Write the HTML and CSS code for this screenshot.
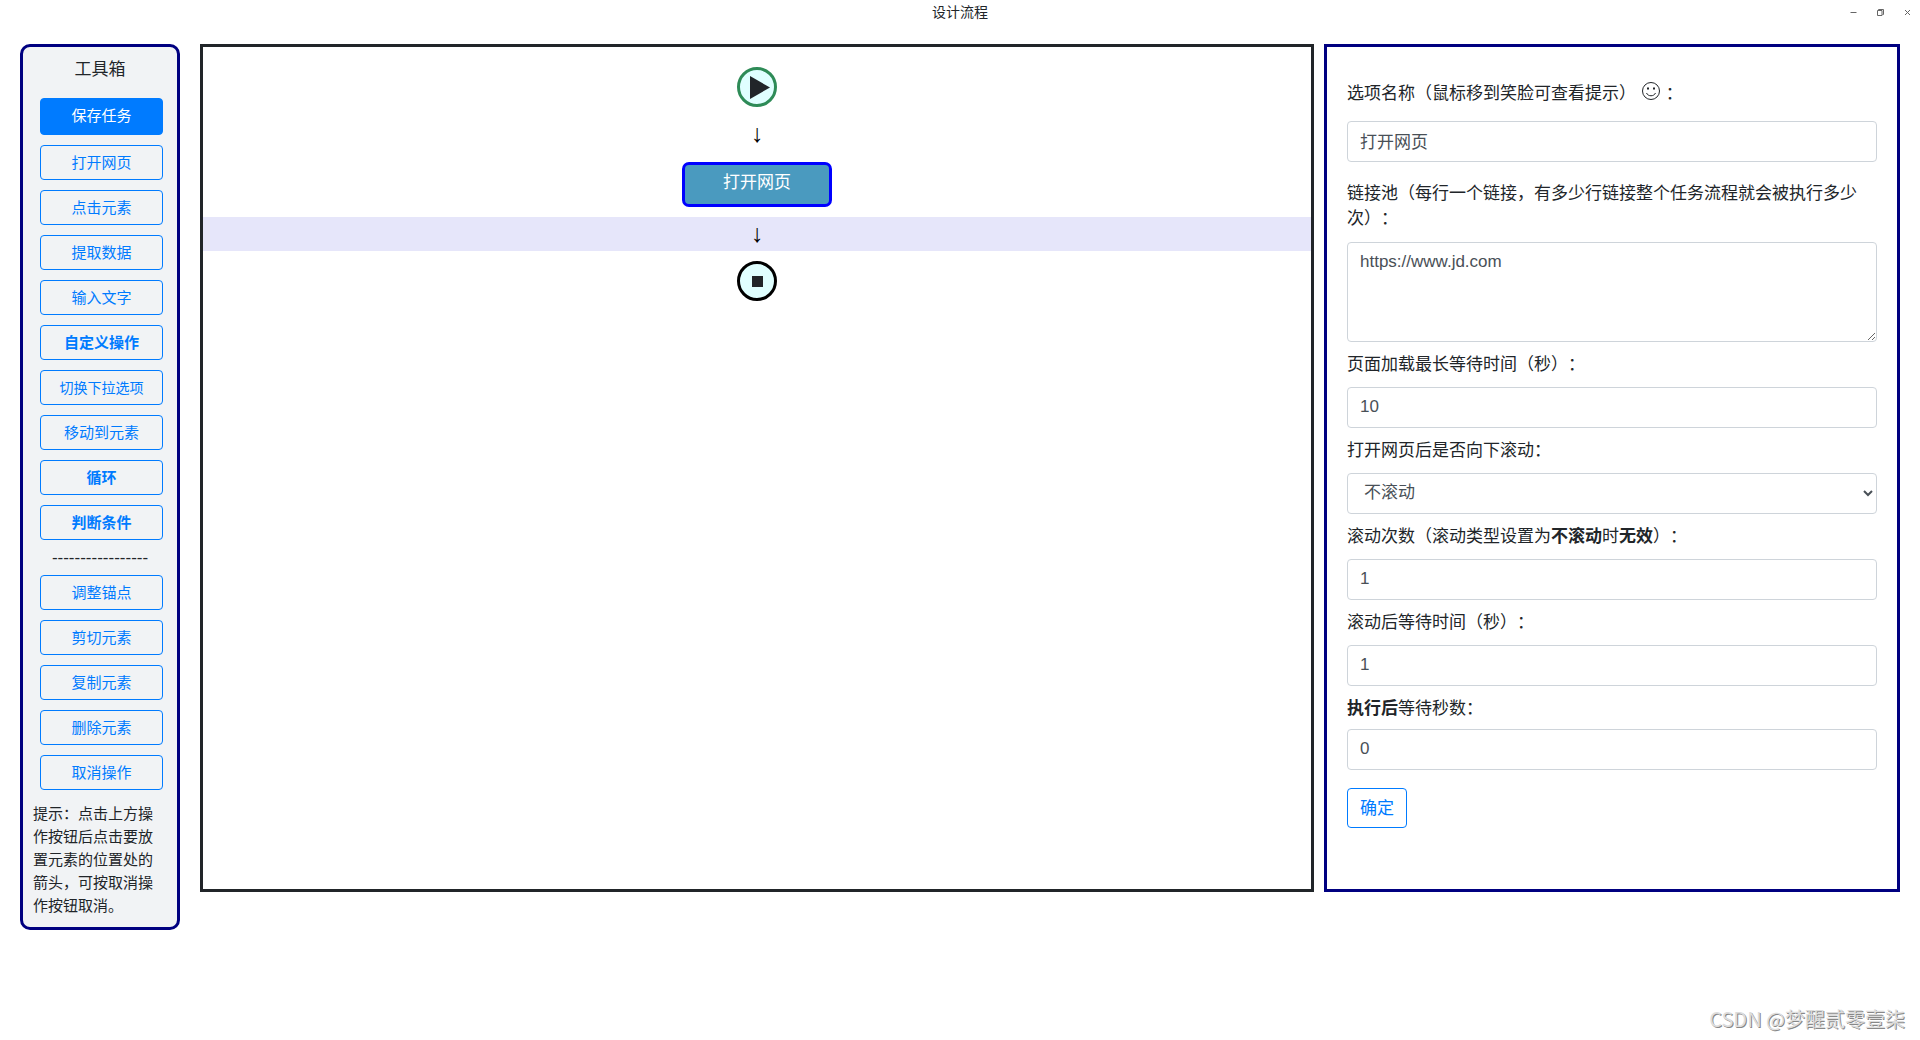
FILE: index.html
```html
<!DOCTYPE html>
<html lang="zh-CN">
<head>
<meta charset="utf-8">
<title>设计流程</title>
<link rel="stylesheet" href="styles.css">
</head>
<body>
<header class="titlebar">
  <h1 class="titlebar-title">设计流程</h1>
  <div class="window-controls">
    <button class="window-btn" type="button" aria-label="最小化"><svg width="7" height="7" viewBox="0 0 7 7"><path d="M0.5 3.5h6" /></svg></button>
    <button class="window-btn" type="button" aria-label="还原"><svg width="7" height="7" viewBox="0 0 7 7"><path d="M1.5 1V.5h5v5H5.500M.5 1.500h4.500v5h-4.500z" /></svg></button>
    <button class="window-btn" type="button" aria-label="关闭"><svg width="7" height="7" viewBox="0 0 7 7"><path d="M1 1l5 5M6 1l-5 5" /></svg></button>
  </div>
</header>
<main class="workspace">
  <aside class="toolbox">
    <h2 class="toolbox-title">工具箱</h2>
    <div class="tools">
      <button class="tool tool-primary" type="button">保存任务</button>
      <button class="tool" type="button">打开网页</button>
      <button class="tool" type="button">点击元素</button>
      <button class="tool" type="button">提取数据</button>
      <button class="tool" type="button">输入文字</button>
      <button class="tool tool-strong" type="button">自定义操作</button>
      <button class="tool tool-small" type="button">切换下拉选项</button>
      <button class="tool" type="button">移动到元素</button>
      <button class="tool tool-strong" type="button">循环</button>
      <button class="tool tool-strong" type="button">判断条件</button>
    </div>
    <p class="divider">-----------------</p>
    <div class="tools">
      <button class="tool" type="button">调整锚点</button>
      <button class="tool" type="button">剪切元素</button>
      <button class="tool" type="button">复制元素</button>
      <button class="tool" type="button">删除元素</button>
      <button class="tool" type="button">取消操作</button>
    </div>
    <p class="tip">提示：点击上方操作按钮后点击要放置元素的位置处的箭头，可按取消操作按钮取消。</p>
  </aside>
  <div class="editor">
    <section class="flow">
      <div class="terminal terminal-start"><svg width="40" height="40" viewBox="0 0 40 40"><path d="M13 9v23l20-11.500z" /></svg></div>
      <div class="arrow">↓</div>
      <div class="node">打开网页</div>
      <div class="arrow arrow-active">↓</div>
      <div class="terminal terminal-end"><svg width="40" height="40" viewBox="0 0 40 40"><path d="M15 15h11v11h-11z" /></svg></div>
    </section>
    <form class="options">
      <label class="label label-name" for="name">选项名称（鼠标移到笑脸可查看提示） <svg class="smile" width="20" height="20" viewBox="0 0 20 20"><circle cx="10" cy="10" r="8.500" /><path d="M5.500 12c1.500 3.700 7.500 3.700 9 0" /><path class="smile-eyes" d="M6 6.500h2v2h-2zM12 6.500h2v2h-2z" /></svg>：</label>
      <input class="control" id="name" type="text" value="打开网页">
      <label class="label label-links" for="links">链接池（每行一个链接，有多少行链接整个任务流程就会被执行多少次）：</label>
      <textarea class="control control-area" id="links">https://www.jd.com</textarea>
      <label class="label" for="max-wait">页面加载最长等待时间（秒）：</label>
      <input class="control" id="max-wait" type="text" value="10">
      <label class="label" for="scroll">打开网页后是否向下滚动：</label>
      <select class="control control-select" id="scroll"><option>不滚动</option></select>
      <label class="label" for="scroll-count">滚动次数（滚动类型设置为<b>不滚动</b>时<b>无效</b>）：</label>
      <input class="control" id="scroll-count" type="text" value="1">
      <label class="label" for="scroll-wait">滚动后等待时间（秒）：</label>
      <input class="control" id="scroll-wait" type="text" value="1">
      <label class="label label-last" for="after-wait"><b>执行后</b>等待秒数：</label>
      <input class="control" id="after-wait" type="text" value="0">
      <button class="confirm" type="button">确定</button>
    </form>
  </div>
</main>
<footer class="credit">CSDN @梦醒贰零壹柒</footer>
</body>
</html>
```
FILE: styles.css
```css
* { box-sizing: border-box; }
body {
  margin: 0;
  min-height: 100vh;
  display: flex;
  flex-direction: column;
  background: #fff;
  color: #212529;
  font: 17px/25px "Liberation Sans", "Noto Sans CJK SC", sans-serif;
  text-spacing-trim: space-all;
}
h1, h2, p { margin: 0; font-weight: 400; }
button, input, textarea, select { font: inherit; }
b { font-weight: 700; }

.titlebar {
  display: grid;
  grid-template-columns: 1fr auto 1fr;
  align-items: center;
  height: 24px;
}
.titlebar-title { grid-column: 2; font-size: 14px; line-height: 24px; }
.window-controls { display: flex; justify-content: flex-end; gap: 10px; padding-right: 4px; }
.window-btn {
  display: flex;
  align-items: center;
  justify-content: center;
  width: 17px;
  height: 24px;
  padding: 0;
  border: 0;
  background: none;
}
.window-btn svg { fill: none; stroke: #666; }

.workspace {
  display: grid;
  grid-template-columns: 160px 1fr;
  gap: 20px;
  align-items: start;
  padding: 20px;
}
.toolbox {
  padding: 10px;
  border: 3px solid navy;
  border-radius: 10px;
  background: #f1f3f5;
}
.toolbox-title { margin-bottom: 16px; font-size: 17px; line-height: 25px; text-align: center; }
.tools { display: grid; gap: 10px; padding: 0 4px 0 7px; }
.tool {
  height: 35px;
  padding: 0;
  border: 1px solid #007bff;
  border-radius: 4px;
  background: none;
  color: #007bff;
  font-size: 15px;
  line-height: 22px;
}
.tool-primary { height: 37px; padding-bottom: 2px; background: #007bff; color: #fff; }
.tool-strong { font-weight: 700; }
.tool-small { font-size: 14px; }
.divider { padding: 5px 0; text-align: center; }
.tip { margin-top: 12px; padding-right: 10px; font-size: 15px; line-height: 23px; }

.editor {
  display: grid;
  grid-template-columns: 1fr 30vw;
  gap: 10px;
}
.flow {
  display: flex;
  flex-direction: column;
  align-items: center;
  gap: 10px;
  padding-top: 20px;
  border: 3px solid #212529;
}
.terminal { width: 40px; height: 40px; border-radius: 50%; background: #e0ffff; }
.terminal svg { display: block; margin: -3px; fill: #212529; }
.terminal-start { border: 3px solid seagreen; }
.terminal-end { border: 3px solid #000; }
.arrow {
  align-self: stretch;
  padding-bottom: 2px;
  font-size: 25px;
  line-height: 33px;
  text-align: center;
  color: #000;
}
.arrow-active { line-height: 32px; background: #e6e6fa; }
.node {
  width: 150px;
  height: 45px;
  border: 3px solid blue;
  border-radius: 7px;
  background: #4a9abf;
  color: #fff;
  line-height: 35px;
  text-align: center;
}

.options {
  display: flex;
  flex-direction: column;
  padding: 24px 20px 61px;
  border: 3px solid navy;
}
.label { padding: 10px 0; }
.label-name { padding-bottom: 15px; }
.label-links { padding: 19px 0 11px; }
.label-last { padding-bottom: 8px; }
.smile { margin: -5px 5px 0 0; vertical-align: -2px; fill: none; stroke: #212529; }
.smile-eyes { fill: #212529; stroke: none; }
.control {
  width: 100%;
  height: 41px;
  padding: 5px 12px 7px;
  border: 1px solid #ced4da;
  border-radius: 4px;
  background: #fff;
  color: #495057;
}
.control-area { display: block; height: 100px; padding-top: 6px; resize: vertical; }
.confirm {
  align-self: flex-start;
  height: 40px;
  margin-top: 18px;
  padding: 6px 12px;
  border: 1px solid #007bff;
  border-radius: 4px;
  background: #fff;
  color: #007bff;
}
.credit {
  margin-top: auto;
  padding: 0 15px 9px 0;
  text-align: right;
  font-family: "Noto Sans CJK SC", sans-serif;
  font-size: 20px;
  color: #ddd;
  text-shadow: 1px 1px 0 #888;
}
```
